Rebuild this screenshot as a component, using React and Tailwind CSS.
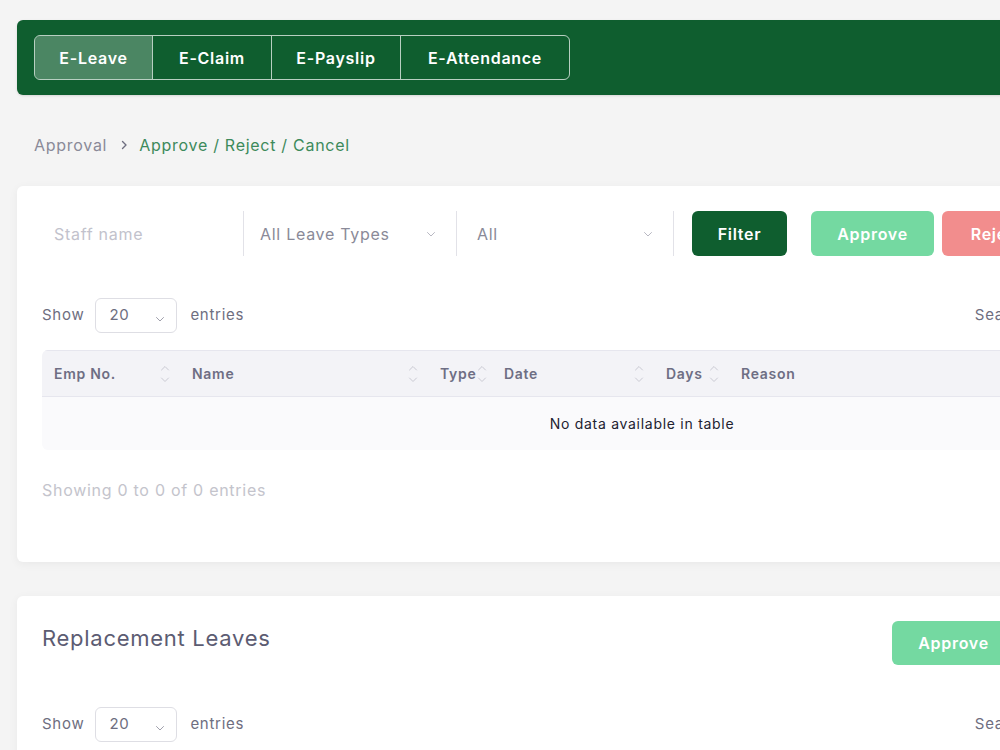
import React from "react";

const tabs = ["E-Leave", "E-Claim", "E-Payslip", "E-Attendance"];
const tabWidths = ["w-[117px]", "w-[119px]", "w-[129px]", "w-[169px]"];

const columns = [
  { label: "Emp No.", w: "w-[138px]" },
  { label: "Name", w: "w-[248px]" },
  { label: "Type", w: "w-[64px]" },
  { label: "Date", w: "w-[162px]" },
  { label: "Days", w: "w-[75px]" },
  { label: "Reason", w: "flex-1", noSort: true },
];

const Chevron = ({ className }) => (
  <svg className={className} viewBox="0 0 12 12" fill="none">
    <path d="M2.5 4.5 6 8l3.5-3.5" stroke="currentColor" strokeWidth="1" strokeLinecap="round" strokeLinejoin="round" />
  </svg>
);

const SortIcon = () => (
  <svg className="w-[10px] h-[22px] shrink-0 text-[#c9c9d2]" viewBox="0 0 10 22" fill="none">
    <path d="M1.5 7 5 3.5 8.5 7" stroke="currentColor" strokeWidth="1" strokeLinecap="round" strokeLinejoin="round" />
    <path d="M1.5 15 5 18.5 8.5 15" stroke="currentColor" strokeWidth="1" strokeLinecap="round" strokeLinejoin="round" />
  </svg>
);

const ShowEntries = () => (
  <div className="flex items-center justify-between">
    <div className="flex items-center text-[15px] text-[#6e6e80]">
      <span>Show</span>
      <div className="ml-[11px] w-[82px] h-[35px] border border-[#dedee4] rounded-md flex items-center justify-between pl-[13px] pr-[10px] text-[#6e6e80]">
        <span>20</span>
        <Chevron className="w-[12px] h-[12px] mt-[6px] text-[#a0a0ac]" />
      </div>
      <span className="ml-[13px]">entries</span>
    </div>
    <div className="flex items-center text-[15px] text-[#6e6e80]">
      <span>Search:</span>
      <div className="ml-[8px] w-[200px] h-[35px] border border-[#dedee4] rounded-md"></div>
    </div>
  </div>
);

const App = () => {
  return (
    <div
      className="w-full h-[750px] overflow-hidden bg-[#f4f4f4] tracking-[0.045em]"
      style={{ fontFamily: "Inter, 'Noto Sans', sans-serif" }}
    >
      <div className="w-[1300px] pl-[17px] pt-[20px]">
        <div className="w-[1250px] h-[75px] bg-[#0f5e2f] rounded-md px-[17px] flex items-center shadow-sm">
          <div className="flex border border-white/70 rounded-md overflow-hidden h-[45px]">
            {tabs.map((t, i) => (
              <div
                key={t}
                className={`${tabWidths[i]} flex items-center justify-center text-[16px] font-semibold text-white ${i > 0 ? "border-l border-white/70" : ""} ${i === 0 ? "bg-white/25" : ""}`}
              >
                {t}
              </div>
            ))}
          </div>
        </div>

        <div className="h-[91px] pt-[9px] flex items-center pl-[17px] text-[16px]">
          <span className="text-[#8a8a98]">Approval</span>
          <svg className="w-[10px] h-[10px] ml-[12px] mr-[10px] text-[#6e6e80]" viewBox="0 0 10 10" fill="none">
            <path d="M3.5 1.5 7 5 3.5 8.5" stroke="currentColor" strokeWidth="1.4" strokeLinecap="round" strokeLinejoin="round" />
          </svg>
          <span className="text-[#3d8a5b]">Approve / Reject / Cancel</span>
        </div>

        <div className="w-[1250px] bg-white rounded-md shadow-[0_2px_10px_rgba(0,0,0,0.05)] px-[25px] pt-[25px] pb-[60px]">
          <div className="flex items-center h-[45px]">
            <div className="w-[201px] h-full flex items-center pl-[12px] text-[16px] text-[#c2c2cc]">Staff name</div>
            <div className="w-[213px] h-full border-l border-[#e2e2e8] flex items-center justify-between pl-[16px] pr-[19px] text-[16px] text-[#8a8a98]">
              <span>All Leave Types</span>
              <Chevron className="w-[12px] h-[12px] text-[#b8b8c2]" />
            </div>
            <div className="w-[217px] h-full border-l border-[#e2e2e8] flex items-center justify-between pl-[20px] pr-[19px] text-[16px] text-[#8a8a98]">
              <span>All</span>
              <Chevron className="w-[12px] h-[12px] text-[#b8b8c2]" />
            </div>
            <div className="h-full border-l border-[#e2e2e8]"></div>
            <button className="ml-[18px] w-[95px] h-full rounded-md bg-[#0f5e2f] text-white text-[16px] font-semibold">Filter</button>
            <button className="ml-[24px] w-[123px] h-full rounded-md bg-[#74d9a1] text-white text-[16px] font-semibold">Approve</button>
            <button className="ml-[8px] w-[110px] h-full rounded-md bg-[#f28d8d] text-white text-[16px] font-semibold">Reject</button>
            <button className="ml-[8px] w-[110px] h-full rounded-md bg-[#f5c97a] text-white text-[16px] font-semibold">Cancel</button>
          </div>

          <div className="mt-[42px]">
            <ShowEntries />
          </div>

          <div className="mt-[17px] w-[1200px] rounded-md overflow-hidden">
            <div className="flex h-[47px] bg-[#f3f3f7] border-t border-b border-[#e6e6ee]">
              {columns.map((c) => (
                <div
                  key={c.label}
                  className={`${c.w} flex items-center justify-between pl-[12px] pr-[10px] text-[14px] font-semibold text-[#6e6e84]`}
                >
                  <span className="whitespace-nowrap">{c.label}</span>
                  {!c.noSort && <SortIcon />}
                </div>
              ))}
            </div>
            <div className="h-[53px] bg-[#fafafc] flex items-center justify-center text-[14px] text-[#222230]">
              No data available in table
            </div>
          </div>

          <div className="mt-[28px] text-[16px] text-[#c4c4cc]">Showing 0 to 0 of 0 entries</div>
        </div>

        <div className="mt-[34px] w-[1250px] bg-white rounded-md shadow-[0_2px_10px_rgba(0,0,0,0.05)] px-[25px] pt-[25px] pb-[40px]">
          <div className="flex items-start justify-between h-[44px]">
            <h2 className="mt-[3px] text-[22px] leading-[28px] text-[#5c5c72]">Replacement Leaves</h2>
            <div className="flex h-full">
              <button className="w-[123px] h-full rounded-md bg-[#74d9a1] text-white text-[16px] font-semibold">Approve</button>
              <button className="ml-[8px] w-[106px] h-full rounded-md bg-[#f28d8d] text-white text-[16px] font-semibold">Reject</button>
              <button className="ml-[8px] w-[105px] h-full rounded-md bg-[#f5c97a] text-white text-[16px] font-semibold">Cancel</button>
            </div>
          </div>
          <div className="mt-[42px]">
            <ShowEntries />
          </div>
        </div>
      </div>
    </div>
  );
};

export default App;
